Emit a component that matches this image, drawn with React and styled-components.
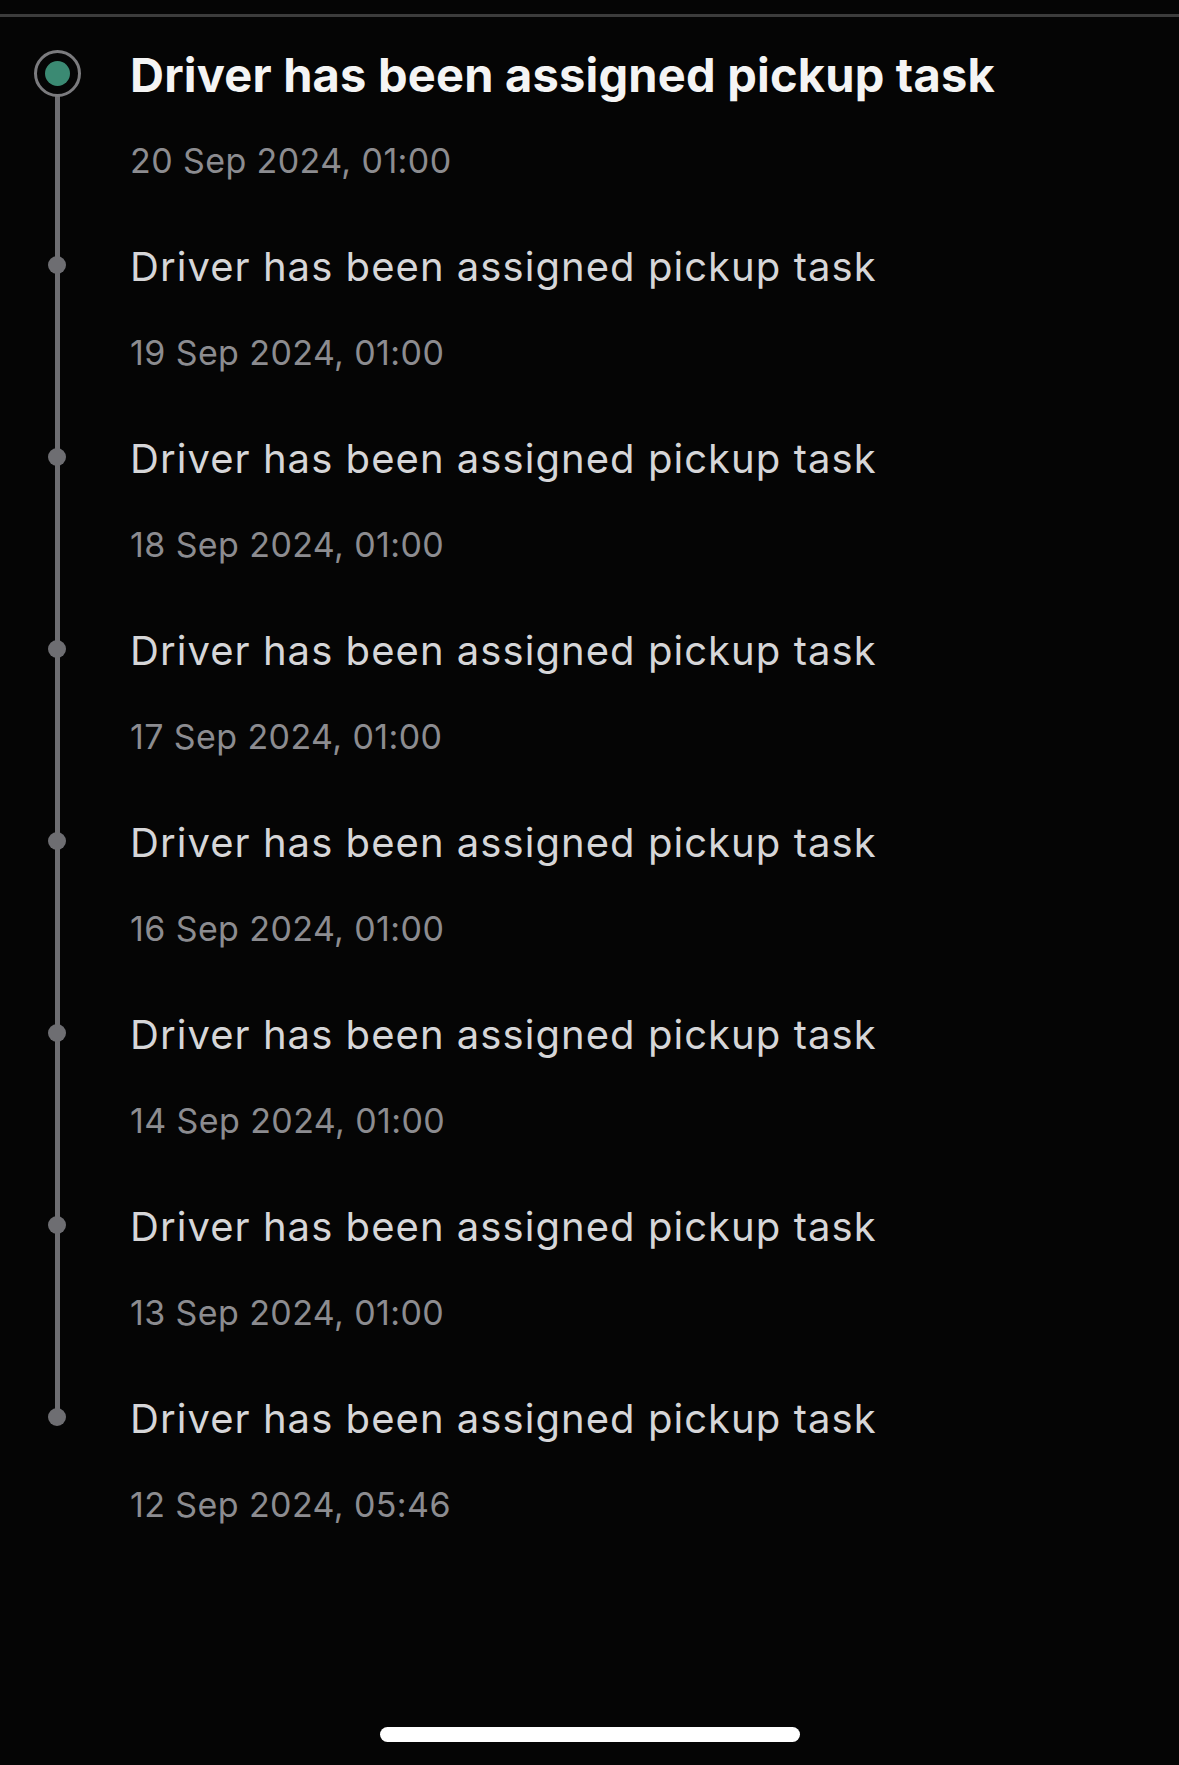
import React from "react";
import styled, { createGlobalStyle } from "styled-components";

const Global = createGlobalStyle`
  html, body { margin: 0; padding: 0; background: #050505; }
  body { font-family: Inter, "Noto Sans", sans-serif; -webkit-font-smoothing: antialiased; }
  * { box-sizing: border-box; }
`;

const Screen = styled.div`
  width: 1179px;
  min-height: 1765px;
  background: #050505;
  display: flex;
  flex-direction: column;
`;

const TopRule = styled.div`
  height: 3px;
  margin-top: 14px;
  background: #3c3c3c;
`;

const List = styled.ol`
  list-style: none;
  margin: 34px 0 0;
  padding: 0;
  flex: 1;
`;

const Item = styled.li`
  display: grid;
  grid-template-columns: 114px 1fr;
  column-gap: 16px;
`;

const RailCol = styled.div`
  display: flex;
  justify-content: center;
  align-items: flex-start;
  background-image: linear-gradient(#6e6e72, #6e6e72);
  background-repeat: no-repeat;
  background-size: 5px ${(p) => (p.$last ? "24px" : p.$first ? "calc(100% - 24px)" : "100%")};
  background-position: center ${(p) => (p.$first ? "24px" : "0")};
`;

const MarkerSlot = styled.div`
  height: 48px;
  display: flex;
  align-items: center;
  justify-content: center;
  margin-top: -2px;
`;

const Ring = styled.div`
  width: 47px;
  height: 47px;
  border-radius: 50%;
  border: 3px solid #7b7b7e;
  background: #050505;
  display: flex;
  align-items: center;
  justify-content: center;
`;

const ActiveDot = styled.div`
  width: 25px;
  height: 25px;
  border-radius: 50%;
  background: #3b8a73;
`;

const Dot = styled.div`
  width: 18px;
  height: 18px;
  border-radius: 50%;
  background: #6e6e72;
`;

const Body = styled.div`
  display: flex;
  flex-direction: column;
  gap: 45px;
  padding-bottom: 65px;
`;

const Title = styled.div`
  font-size: ${(p) => (p.$active ? "47px" : "40px")};
  font-weight: ${(p) => (p.$active ? 700 : 400)};
  line-height: 48px;
  color: ${(p) => (p.$active ? "#f4f4f4" : "#d6d6d8")};
  letter-spacing: ${(p) => (p.$active ? "0.2px" : "1.05px")};
  white-space: nowrap;
`;

const Stamp = styled.div`
  font-size: 34px;
  line-height: 34px;
  color: #8c8c90;
  letter-spacing: 0.4px;
  white-space: nowrap;
`;

const HomeBar = styled.div`
  align-self: center;
  width: 420px;
  height: 15px;
  border-radius: 8px;
  background: #ffffff;
  margin-bottom: 23px;
`;

const events = [
  "20 Sep 2024, 01:00",
  "19 Sep 2024, 01:00",
  "18 Sep 2024, 01:00",
  "17 Sep 2024, 01:00",
  "16 Sep 2024, 01:00",
  "14 Sep 2024, 01:00",
  "13 Sep 2024, 01:00",
  "12 Sep 2024, 05:46",
];

export default function App() {
  return (
    <Screen>
      <Global />
      <TopRule />
      <List>
        {events.map((d, i) => {
          const first = i === 0;
          const last = i === events.length - 1;
          return (
            <Item key={d}>
              <RailCol $first={first} $last={last}>
                <MarkerSlot>
                  {first ? (
                    <Ring>
                      <ActiveDot />
                    </Ring>
                  ) : (
                    <Dot />
                  )}
                </MarkerSlot>
              </RailCol>
              <Body>
                <Title $active={first}>Driver has been assigned pickup task</Title>
                <Stamp>{d}</Stamp>
              </Body>
            </Item>
          );
        })}
      </List>
      <HomeBar />
    </Screen>
  );
}
